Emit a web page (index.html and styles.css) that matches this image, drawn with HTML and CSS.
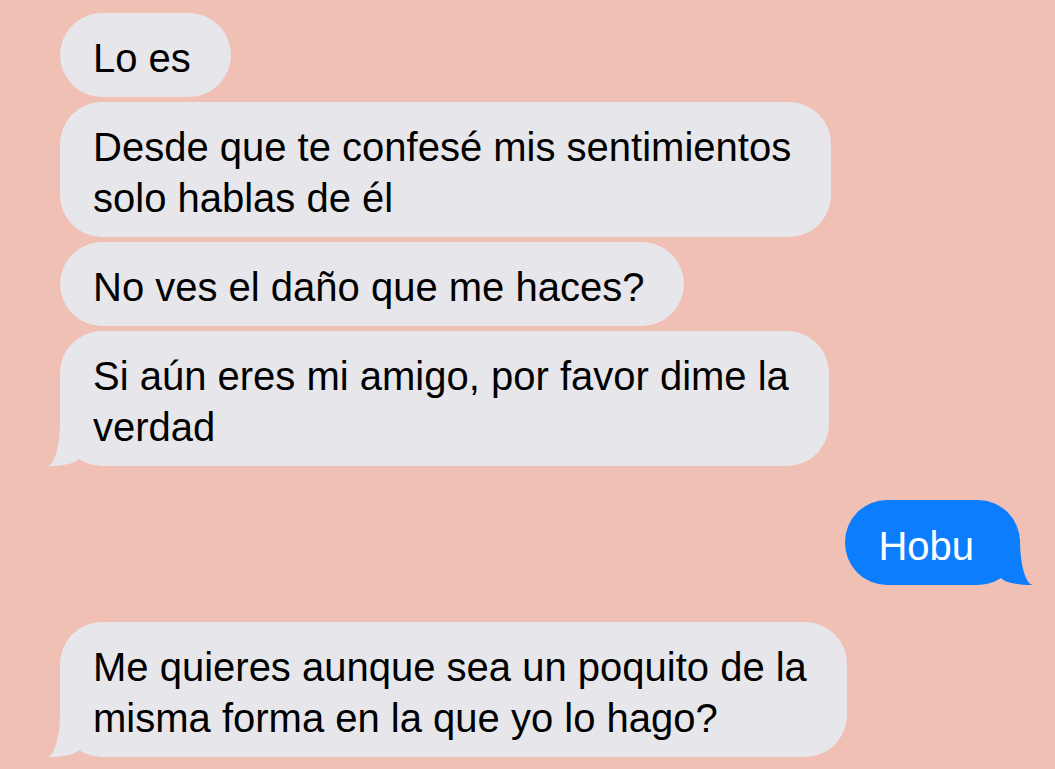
FILE: index.html
```html
<!DOCTYPE html>
<html lang="es">

<head>
    <meta charset="UTF-8">
    <meta name="viewport" content="width=device-width, initial-scale=1.0">
    <title>Mensajes</title>
    <link rel="stylesheet" href="styles.css">
</head>

<body>
    <div class="chat">
        <div class="group">
            <div class="bubble them">Lo es</div>
            <div class="bubble them">Desde que te confesé mis sentimientos<br>solo hablas de él</div>
            <div class="bubble them">No ves el daño que me haces?</div>
            <div class="bubble them tail">Si aún eres mi amigo, por favor dime la<br>verdad</div>
        </div>

        <div class="bubble me tail">Hobu</div>

        <div class="bubble them tail last">Me quieres aunque sea un poquito de la<br>misma forma en la que yo lo hago?</div>
    </div>
</body>

</html>
```

FILE: styles.css
```css
body {
    margin: 0;
    background-color: #f0c0b4;
    font-family: 'Liberation Sans', Arial, sans-serif;
    min-height: 100vh;
}

.chat {
    display: flex;
    flex-direction: column;
    align-items: flex-start;
    padding: 13px 35px 0 60px;
}

.group {
    display: flex;
    flex-direction: column;
    align-items: flex-start;
    gap: 5px;
}

.bubble {
    position: relative;
    width: fit-content;
    font-size: 40px;
    line-height: 51px;
    padding: 20px 40px 13px 33px;
    border-radius: 42px;
    white-space: nowrap;
}

.them {
    background-color: #e6e6eb;
    color: #000;
}

.me {
    align-self: flex-end;
    margin-top: 34px;
    background-color: #0b7dfd;
    color: #fff;
    padding: 21px 46px 13px 33px;
}

.last {
    margin-top: 37px;
}

/* tail of the bubble */
.tail::before,
.tail::after {
    content: "";
    position: absolute;
    bottom: 0;
}

.them.tail::before {
    left: -13px;
    width: 32px;
    height: 46px;
    background-color: #e6e6eb;
    border-bottom-right-radius: 32px 8px;
}

.them.tail::after {
    left: -40px;
    width: 40px;
    height: 50px;
    background-color: #f0c0b4;
    border-bottom-right-radius: 13px 44px;
}

.me.tail::before {
    right: -13px;
    width: 32px;
    height: 46px;
    background-color: #0b7dfd;
    border-bottom-left-radius: 32px 8px;
}

.me.tail::after {
    right: -40px;
    width: 40px;
    height: 50px;
    background-color: #f0c0b4;
    border-bottom-left-radius: 13px 44px;
}
```
